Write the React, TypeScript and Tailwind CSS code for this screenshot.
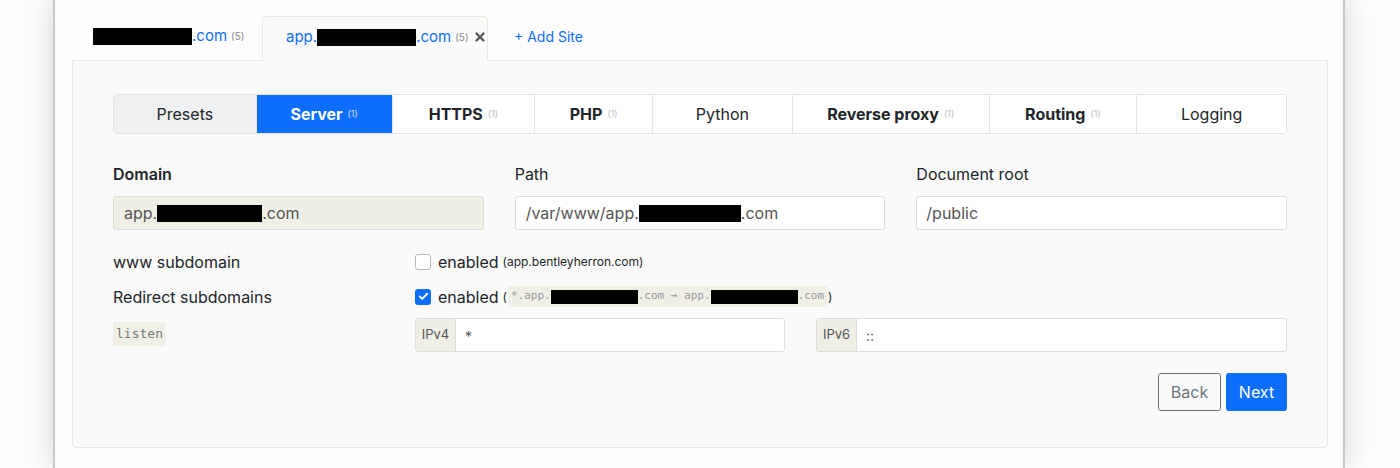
import { Check, X } from 'lucide-react';

const Redact = ({ w, h = 17 }: { w: number; h?: number }) => (
  <span className="inline-block bg-black align-middle" style={{ width: w, height: h }} />
);

const tabs = [
  { label: 'Presets', w: 'w-[142px]', count: false, bold: false },
  { label: 'Server', w: 'w-[136px]', count: true, bold: true, active: true },
  { label: 'HTTPS', w: 'w-[143px]', count: true, bold: true },
  { label: 'PHP', w: 'w-[118px]', count: true, bold: true },
  { label: 'Python', w: 'w-[140px]', count: false, bold: false },
  { label: 'Reverse proxy', w: 'w-[197px]', count: true, bold: true },
  { label: 'Routing', w: 'w-[148px]', count: true, bold: true },
  { label: 'Logging', w: 'w-[150px]', count: false, bold: false },
];

export default function App() {
  return (
    <div className="h-[468px] overflow-hidden bg-[#fdfdfd] flex text-[#212529] font-['Inter','Noto_Sans',sans-serif]">
      <div className="w-[53px] shrink-0" />
      <div className="w-[1292px] shrink-0 border-x-2 border-[#c3c6cc] bg-[#fdfdfd] shadow-[0_0_28px_rgba(0,0,0,0.16)] pl-[17px] pr-[15px] pt-[15px]">
        {/* site tabs */}
        <div className="flex items-end h-[45px] text-[15px]">
          <div className="w-[190px] h-[44px] pl-[21px] pb-[4px] flex items-center text-[#0d6efd]">
            <Redact w={99} />
            <span>.com</span>
            <span className="ml-1 text-[10px] text-[#888]">(5)</span>
          </div>
          <div className="relative top-px w-[226px] h-[45px] pl-[23px] pb-[4px] flex items-center border border-b-0 border-[#e9e8dc] rounded-t-[4px] bg-[#fafafa] text-[#0d6efd]">
            <span>app.</span>
            <Redact w={99} />
            <span>.com</span>
            <span className="ml-1 text-[10px] text-[#888]">(5)</span>
            <X size={14} strokeWidth={4} className="ml-[4px] text-[#555]" />
          </div>
          <div className="h-[44px] ml-[26px] pb-[4px] flex items-center text-[14px] text-[#0d6efd]">+ Add Site</div>
        </div>

        {/* card */}
        <div className="h-[388px] border border-[#e9e8dc] rounded-b-[4px] bg-[#fafafa] px-[40px] pt-[33px]">
          <div className="flex h-[40px] border border-[#e3e3e3] rounded-[4px] overflow-hidden text-[16px]">
            {tabs.map((t, i) => (
              <div
                key={t.label}
                className={`${t.w} flex items-center justify-center ${i > 0 ? 'border-l border-[#e6e6e6]' : ''} ${
                  t.active ? 'bg-[#0d6efd] text-white' : i === 0 ? 'bg-[#eef0f2]' : 'bg-white'
                } ${t.bold ? 'font-bold' : ''}`}
              >
                {t.label}
                {t.count && (
                  <span className={`ml-[5px] text-[9px] font-normal ${t.active ? 'text-white/80' : 'text-[#bbb]'}`}>(1)</span>
                )}
              </div>
            ))}
          </div>

          <div className="grid grid-cols-3 gap-x-[31px] mt-[30px]">
            <div>
              <div className="h-[20px] leading-[20px] text-[16px] font-semibold">Domain</div>
              <div className="mt-[12px] h-[34px] flex items-center px-[10px] border border-[#dcdcd4] rounded-[3px] bg-[#f0efe6] text-[16px] text-[#555]">
                <span>app.</span>
                <Redact w={105} />
                <span>.com</span>
              </div>
            </div>
            <div>
              <div className="h-[20px] leading-[20px] text-[16px]">Path</div>
              <div className="mt-[12px] h-[34px] flex items-center px-[10px] border border-[#dddddd] rounded-[3px] bg-white text-[16px] text-[#555]">
                <span>/var/www/app.</span>
                <Redact w={102} />
                <span>.com</span>
              </div>
            </div>
            <div>
              <div className="h-[20px] leading-[20px] text-[16px]">Document root</div>
              <div className="mt-[12px] h-[34px] flex items-center px-[9px] border border-[#dddddd] rounded-[3px] bg-white text-[16px] text-[#555]">
                /public
              </div>
            </div>
          </div>

          <div className="mt-[14px] flex h-[35px] items-center text-[16px]">
            <div className="w-[302px]">www subdomain</div>
            <span className="w-[16px] h-[16px] rounded-[3px] border border-[#b9b9b9] bg-white" />
            <span className="ml-[7px]">enabled</span>
            <span className="ml-[4px] text-[12px]">(app.bentleyherron.com)</span>
          </div>
          <div className="flex h-[35px] items-center text-[16px]">
            <div className="w-[302px]">Redirect subdomains</div>
            <span className="w-[16px] h-[16px] rounded-[3px] bg-[#0d6efd] flex items-center justify-center">
              <Check size={11} strokeWidth={4} className="text-white" />
            </span>
            <span className="ml-[7px]">enabled</span>
            <span className="ml-[4px] text-[12px] flex items-center">
              (
              <code className="mx-[1px] px-[3px] py-[2px] bg-[#f0efe6] text-[#999] text-[11px] font-['DejaVu_Sans_Mono',monospace] flex items-center">
                *.app.<Redact w={87} h={14} />.com → app.<Redact w={87} h={14} />.com
              </code>
              )
            </span>
          </div>

          <div className="mt-[4px] flex h-[34px]">
            <div className="w-[302px] pt-[2px]">
              <code className="inline-block px-[3px] py-[2px] bg-[#f0efe6] text-[#777] text-[13px] font-['DejaVu_Sans_Mono',monospace]">listen</code>
            </div>
            <div className="flex gap-[31px] flex-1">
              <div className="w-[370px] flex border border-[#dddddd] rounded-[3px] overflow-hidden bg-white">
                <span className="w-[40px] flex items-center justify-center bg-[#f0efe6] border-r border-[#dddddd] text-[13px] text-[#555]">IPv4</span>
                <span className="pl-[9px] pt-[7px] text-[14px] text-[#555]">*</span>
              </div>
              <div className="flex-1 flex border border-[#dddddd] rounded-[3px] overflow-hidden bg-white">
                <span className="w-[40px] flex items-center justify-center bg-[#f0efe6] border-r border-[#dddddd] text-[13px] text-[#555]">IPv6</span>
                <span className="pl-[9px] flex items-center text-[14px] text-[#555]">::</span>
              </div>
            </div>
          </div>

          <div className="mt-[21px] flex justify-end gap-[5px] text-[16px]">
            <button className="w-[63px] h-[38px] border border-[#6c757d] rounded-[3px] text-[#6c757d] bg-transparent">Back</button>
            <button className="w-[61px] h-[38px] rounded-[3px] bg-[#0d6efd] text-white">Next</button>
          </div>
        </div>
      </div>
    </div>
  );
}
